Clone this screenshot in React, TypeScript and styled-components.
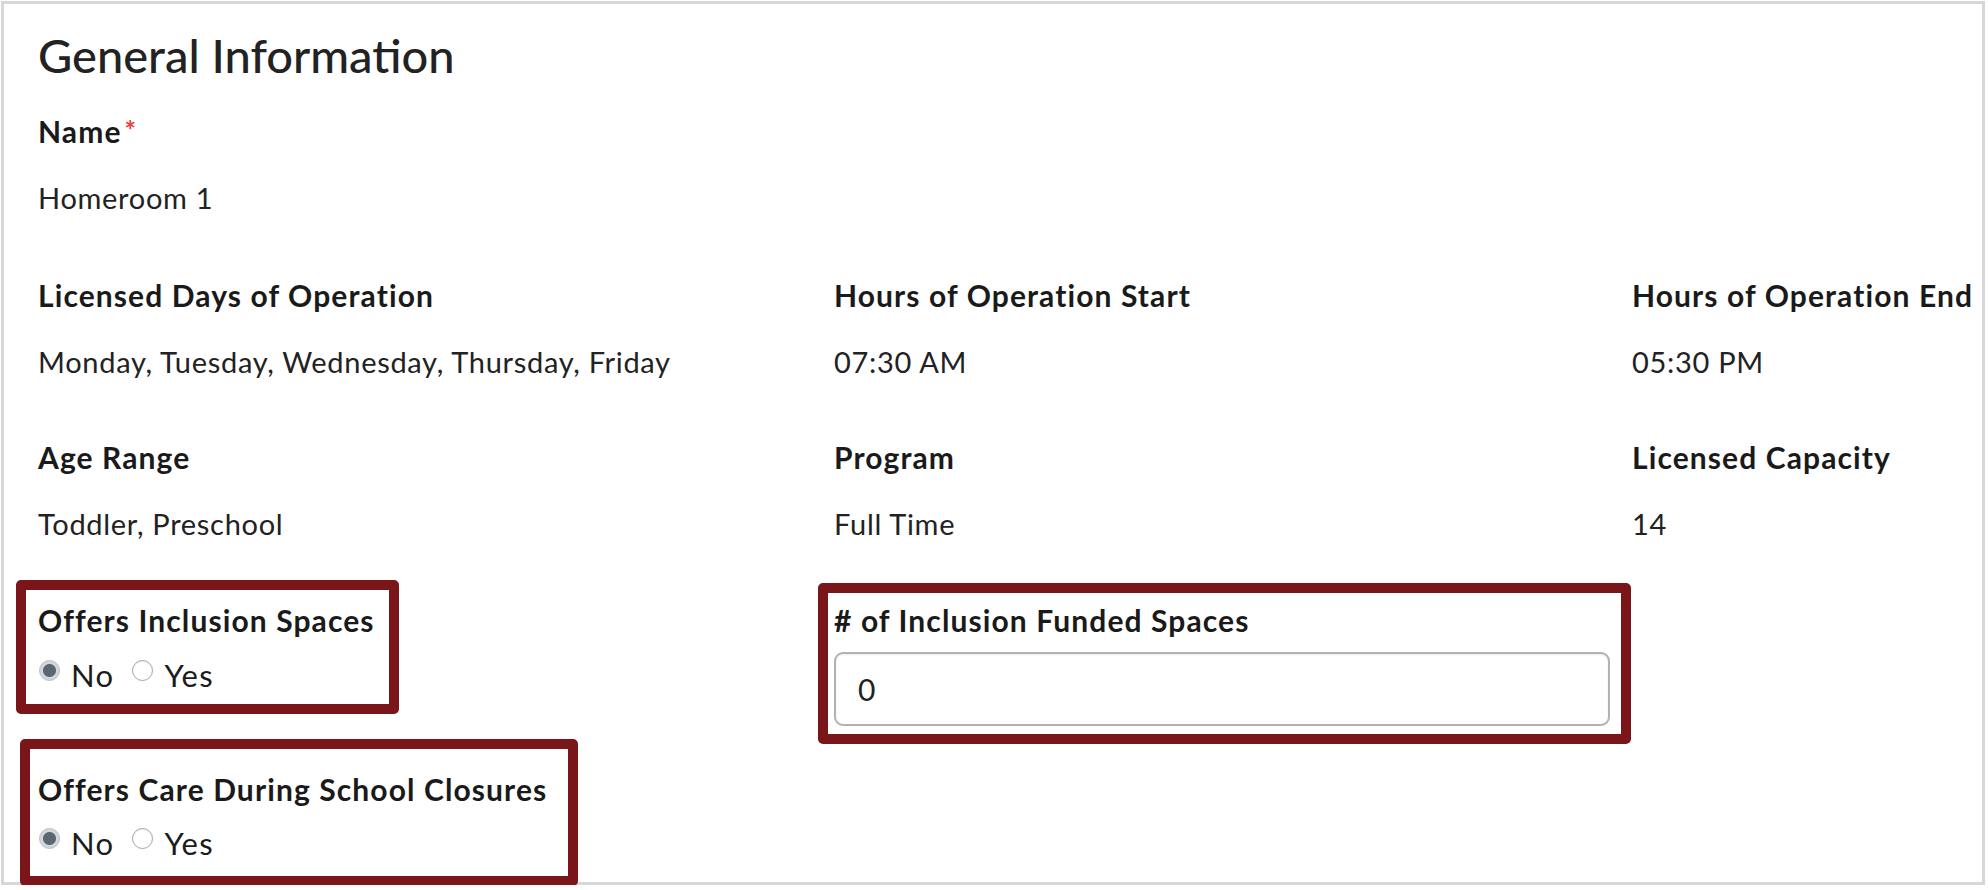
import React from 'react';
import styled, { createGlobalStyle } from 'styled-components';

const GlobalStyle = createGlobalStyle`
  html, body {
    margin: 0;
    padding: 0;
    background: #ffffff;
  }
  body {
    font-family: Lato, "Open Sans", "Liberation Sans", sans-serif;
    color: #1c1c1c;
  }
`;

const Card = styled.section`
  box-sizing: border-box;
  width: 1984px;
  height: 884px;
  margin: 1px 0 0 1px;
  border: 3px solid #d7d7d7;
  padding: 24px 0 0 34px;
`;

const Heading = styled.h2`
  margin: 0;
  font-size: 47px;
  line-height: 54px;
  font-weight: 500;
  color: #222222;
`;

const Field = styled.div<{ $mt?: number }>`
  display: flex;
  flex-direction: column;
  gap: 33px;
  margin-top: ${(p) => p.$mt ?? 0}px;
`;

const Label = styled.div`
  font-size: 30px;
  line-height: 34px;
  font-weight: 700;
  letter-spacing: 1.1px;
  color: #1a1a1a;
  white-space: nowrap;
`;

const Required = styled.span`
  color: #e5413d;
  font-size: 27px;
  font-weight: 700;
  line-height: 1;
  vertical-align: top;
  margin-left: 3px;
  position: relative;
  top: 2px;
`;

const Value = styled.div`
  font-size: 29px;
  line-height: 34px;
  letter-spacing: 0.7px;
  color: #222222;
  white-space: nowrap;
`;

const Row = styled.div<{ $mt: number }>`
  display: grid;
  grid-template-columns: 796px 798px 1fr;
  align-items: start;
  margin-top: ${(p) => p.$mt}px;
`;

const Stack = styled.div`
  display: flex;
  flex-direction: column;
  gap: 25px;
`;

// annotation boxes drawn around the fields
const Highlight = styled.div<{ $shift: number; $width: number; $pad: string; $gap: number; $mt?: number }>`
  box-sizing: border-box;
  display: flex;
  flex-direction: column;
  gap: ${(p) => p.$gap}px;
  width: ${(p) => p.$width}px;
  margin: ${(p) => p.$mt ?? 0}px 0 0 ${(p) => -p.$shift}px;
  padding: ${(p) => p.$pad};
  border: 10px solid #7a1519;
  border-radius: 5px;
  background: #ffffff;
`;

const RadioRow = styled.div`
  display: flex;
  gap: 18px;
  padding-left: 1px;
`;

const Option = styled.label`
  display: flex;
  align-items: flex-start;
  gap: 11px;
  font-size: 31px;
  line-height: 36px;
  letter-spacing: 1.3px;
  color: #1c1c1c;
`;

const Radio = styled.input.attrs({ type: 'radio' })`
  appearance: none;
  box-sizing: border-box;
  width: 21px;
  height: 21px;
  margin: 3px 0 0 0;
  border-radius: 50%;
  border: 1.5px solid #a4a4a4;
  background: #ffffff;
  box-shadow: inset 0 1px 1px rgba(0, 0, 0, 0.08);

  &:checked {
    border: 1.5px solid #b9bdc1;
    background: radial-gradient(circle, #5a6670 0 6px, #d3d7da 7px);
    box-shadow: none;
  }
`;

const NumberInput = styled.input`
  box-sizing: border-box;
  width: 776px;
  height: 74px;
  border: 2px solid #b2b2b2;
  border-radius: 9px;
  padding: 0 0 0 22px;
  font-family: Lato, "Open Sans", sans-serif;
  font-size: 30px;
  color: #222222;
  background: #ffffff;
  box-shadow: inset 0 1px 2px rgba(0, 0, 0, 0.08);
  outline: none;
`;

type YesNoProps = { name: string };

const YesNo: React.FC<YesNoProps> = ({ name }) => (
  <RadioRow>
    <Option>
      <Radio name={name} defaultChecked />
      No
    </Option>
    <Option>
      <Radio name={name} />
      Yes
    </Option>
  </RadioRow>
);

const info = [
  [
    { label: 'Licensed Days of Operation', value: 'Monday, Tuesday, Wednesday, Thursday, Friday' },
    { label: 'Hours of Operation Start', value: '07:30 AM' },
    { label: 'Hours of Operation End', value: '05:30 PM' },
  ],
  [
    { label: 'Age Range', value: 'Toddler, Preschool' },
    { label: 'Program', value: 'Full Time' },
    { label: 'Licensed Capacity', value: '14' },
  ],
];

export default function App() {
  return (
    <>
      <GlobalStyle />
      <Card>
        <Heading>General Information</Heading>

        <Field $mt={32}>
          <Label>
            Name<Required>*</Required>
          </Label>
          <Value>Homeroom 1</Value>
        </Field>

        {info.map((row, i) => (
          <Row key={i} $mt={i === 0 ? 63 : 61}>
            {row.map((f) => (
              <Field key={f.label}>
                <Label>{f.label}</Label>
                <Value>{f.value}</Value>
              </Field>
            ))}
          </Row>
        ))}

        <Row $mt={39}>
          <Stack>
            <Highlight $shift={22} $width={383} $pad="13px 0 11px 12px" $gap={20}>
              <Label>Offers Inclusion Spaces</Label>
              <YesNo name="inclusion" />
            </Highlight>
            <Highlight $shift={18} $width={558} $pad="23px 0 15px 8px" $gap={19}>
              <Label>Offers Care During School Closures</Label>
              <YesNo name="closures" />
            </Highlight>
          </Stack>
          <Highlight $shift={16} $width={813} $pad="10px 0 8px 6px" $gap={15} $mt={3}>
            <Label># of Inclusion Funded Spaces</Label>
            <NumberInput defaultValue="0" />
          </Highlight>
        </Row>
      </Card>
    </>
  );
}
